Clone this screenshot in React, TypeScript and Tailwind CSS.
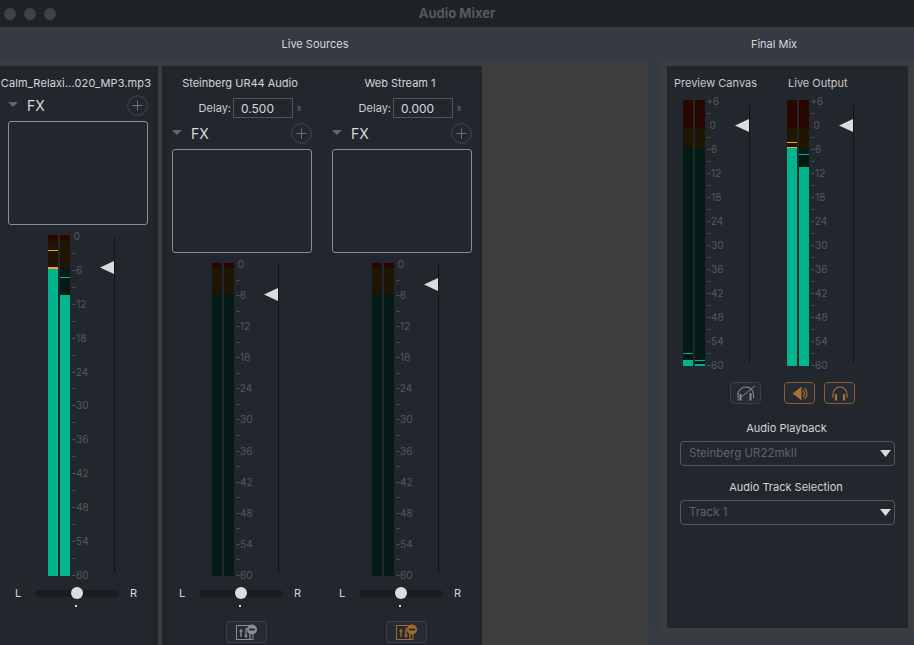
const FONT = "font-['Inter','Liberation_Sans',sans-serif]";

interface BarProps {
  h: number;
  red: number;
  amber: number;
  fill?: number;
  cap?: number;
  peak?: number;
  peakColor?: string;
}

function Bar({ h, red, amber, fill = 0, cap = 0, peak, peakColor = '#00b48d' }: BarProps) {
  return (
    <div className="relative flex w-[10px] flex-col" style={{ height: h }}>
      <div className="bg-[#2a0600]" style={{ height: red }} />
      <div className="bg-[#1f1503]" style={{ height: amber }} />
      <div className="flex-1 bg-[#031a15]" />
      {fill > 0 && (
        <div className="absolute bottom-0 left-0 w-full bg-[#00b48d]" style={{ height: fill }}>
          {cap > 0 && <div className="absolute left-0 w-full bg-[#f5a623]" style={{ height: cap, top: -cap }} />}
        </div>
      )}
      {peak !== undefined && <div className="absolute left-0 h-px w-full" style={{ top: peak, backgroundColor: peakColor }} />}
    </div>
  );
}

function Scale({ labels, zeroInset }: { labels: string[]; zeroInset: string }) {
  return (
    <div className="flex h-full w-[44px] flex-col justify-between pb-[1px] pt-[1px] pl-[1.5px]">
      {labels.map((label, i) => (
        <div
          key={i}
          className={`flex h-0 items-center text-[10px] leading-none text-[#56595e] ${label === '0' ? zeroInset : ''}`}
        >
          {label}
        </div>
      ))}
    </div>
  );
}

function Fader({ top }: { top: number }) {
  return (
    <div className="relative mb-[3px] mt-[2px] w-px bg-[#111417]">
      <svg className="absolute right-[1px]" style={{ top }} width="14" height="13" viewBox="0 0 14 13">
        <polygon points="0,6.5 14,0 14,13" fill="#dcdcdc" />
      </svg>
    </div>
  );
}

function MeterRow({ h, labels, left, right, top, zeroInset }: {
  h: number;
  labels: string[];
  left: BarProps;
  right: BarProps;
  top: number;
  zeroInset: string;
}) {
  return (
    <div className="flex" style={{ height: h }}>
      <div className="flex gap-[2px]">
        <Bar {...left} />
        <Bar {...right} />
      </div>
      <Scale labels={labels} zeroInset={zeroInset} />
      <Fader top={top} />
    </div>
  );
}

const sourceLabels = ['0', '-', '-6', '-', '-12', '-', '-18', '-', '-24', '-', '-30', '-', '-36', '-', '-42', '-', '-48', '-', '-54', '-', '-60'];
const outputLabels = ['+6', '-', ...sourceLabels];

function PlusCircle() {
  return (
    <svg width="21" height="21" viewBox="0 0 21 21" fill="none">
      <circle cx="10.5" cy="10.5" r="9.8" stroke="#44484f" />
      <path d="M10.5 5.5v10M5.5 10.5h10" stroke="#6f7378" />
    </svg>
  );
}

function FxSection() {
  return (
    <>
      <div className="flex h-[31px] items-center pl-[10px] pr-[10px]">
        <svg width="10" height="5" viewBox="0 0 10 5" className="-mt-[2px]">
          <polygon points="0,0 10,0 5,5" fill="#62656a" />
        </svg>
        <span className="ml-[9px] flex-1 text-[14px] text-[#d8d8d8]">FX</span>
        <PlusCircle />
      </div>
      <div className="mx-[10px] h-[104px] rounded-[3px] border border-[#8c8e90]" />
    </>
  );
}

function Pan() {
  return (
    <div className="mt-[10px] flex h-[14px] items-center text-[11px] text-[#d8d8d8]">
      <span className="w-[37px] pl-[17px]">L</span>
      <div className="relative h-[7px] w-[84px] rounded-[4px] bg-[#1a1d20]">
        <div className="absolute left-[36px] top-[-2.5px] h-[12px] w-[12px] rounded-full bg-[#dddddd]" />
        <div className="absolute left-[40px] top-[15px] h-[2px] w-[1.5px] bg-[#dddddd]" />
      </div>
      <span className="ml-[11px]">R</span>
    </div>
  );
}

function MixerIcon({ color }: { color: string }) {
  return (
    <svg width="41" height="22" viewBox="0 0 41 22" fill="none">
      <rect x="10.5" y="4.5" width="16.5" height="14" stroke={color} />
      <path d="M15 8v8M20 7v10M13.5 10h3M18.5 14.5h3M24 10v8" stroke={color} strokeWidth="1.4" />
      <circle cx="26" cy="8.5" r="5" fill={color} />
      <path d="M23 8.5h6" stroke="#22272e" strokeWidth="1.8" />
    </svg>
  );
}

function Channel({ name, delay, top, bar, left, right, mixColor, shift }: {
  name: string;
  delay?: string;
  top: number;
  bar: { h: number; red: number; amber: number };
  left?: Partial<BarProps>;
  right?: Partial<BarProps>;
  mixColor?: string;
  shift?: boolean;
}) {
  return (
    <div className={`flex w-[160px] shrink-0 flex-col ${shift ? '-ml-[2px]' : ''}`}>
      <div className={`mt-[10px] h-[14px] whitespace-nowrap pr-[4px] text-center text-[11px] leading-[14px] text-[#d6d6d6] ${shift ? 'tracking-[0.12px]' : ''}`}>
        {name}
      </div>
      {delay && (
        <div className="mt-[8px] flex h-[20px] items-center">
          <span className="w-[69px] text-right text-[11px] text-[#cfcfcf]">Delay:</span>
          <input
            readOnly
            value={delay}
            className="ml-[2px] h-[20px] w-[60px] border border-[#50545a] bg-transparent px-[7px] text-[12px] text-[#d8d8d8] outline-none"
          />
          <span className="ml-[4px] text-[8px] text-[#6d7075]">s</span>
        </div>
      )}
      <FxSection />
      <div className="ml-[50px] mt-[10px]">
        <MeterRow h={bar.h} labels={sourceLabels} left={{ ...bar, ...left }} right={{ ...bar, ...right }} top={top} zeroInset="pl-[2px]" />
      </div>
      <Pan />
      {mixColor && (
        <button type="button" className="ml-[64px] mt-[21px] h-[22px] w-[41px] rounded-[4px] border border-[#3b3f47] bg-[#262a32]">
          <span className="-m-px block">
            <MixerIcon color={mixColor} />
          </span>
        </button>
      )}
    </div>
  );
}

function OutputStrip({ left, right }: { left: BarProps; right: BarProps }) {
  return <MeterRow h={266} labels={outputLabels} left={left} right={right} top={17} zeroInset="pl-[3px]" />;
}

function SelectBox({ label, value, labelClass }: { label: string; value: string; labelClass: string }) {
  return (
    <>
      <div className={`${labelClass} h-[14px] text-center text-[11px] leading-[14px] text-[#d4d4d4]`}>{label}</div>
      <div className="mt-[6px] flex h-[25px] items-center justify-between rounded-[4px] border border-[#55585f] pl-[8px] pr-[3px] text-[11.5px] text-[#5f6368]">
        {value}
        <svg width="11" height="7" viewBox="0 0 11 7">
          <polygon points="0,0 11,0 5.5,7" fill="#dcdcdc" />
        </svg>
      </div>
    </>
  );
}

const srcBar = { h: 313, red: 5, amber: 26 };
const outBar = { h: 266, red: 28, amber: 20 };
const orange = '#f5a623';

export default function App() {
  return (
    <div className={`${FONT} flex h-[645px] w-[914px] flex-col overflow-hidden bg-[#3d3d3d]`}>
      <div className="relative flex h-[27px] shrink-0 items-center justify-center bg-[#1f2226]">
        <div className="absolute left-[4px] flex gap-[8px]">
          <span className="h-[12px] w-[12px] rounded-full bg-[#404347]" />
          <span className="h-[12px] w-[12px] rounded-full bg-[#404347]" />
          <span className="h-[12px] w-[12px] rounded-full bg-[#404347]" />
        </div>
        <span className="text-[13px] font-bold text-[#56595d]">Audio Mixer</span>
      </div>
      <div className="flex h-[34px] shrink-0 items-center bg-[#353a43] pt-[1px] text-[11px] text-[#d8d8d8]">
        <div className="w-[630px] shrink-0 text-center">Live Sources</div>
        <div className="w-[288px] shrink-0 text-center">Final Mix</div>
      </div>
      <div className="flex min-h-0 flex-1">
        <div className="mt-[5px] w-[158px] shrink-0 overflow-hidden bg-[#22272e]">
          <Channel
            shift
            name="Calm_Relaxi...020_MP3.mp3"
            top={24}
            bar={{ h: 341, red: 6, amber: 27 }}
            left={{ fill: 307, cap: 2, peak: 15, peakColor: orange }}
            right={{ fill: 281, peak: 42 }}
          />
        </div>
        <div className="ml-[4px] mt-[5px] flex w-[320px] shrink-0 bg-[#22272e]">
          <Channel name="Steinberg UR44 Audio" delay="0.500" top={23} bar={srcBar} mixColor="#8a8d92" />
          <Channel name="Web Stream 1" delay="0.000" top={13} bar={srcBar} mixColor="#a06a2c" />
        </div>
        <div className="ml-[165px] flex w-[267px] shrink-0 flex-col">
          <div className="flex min-h-0 flex-1">
            <div className="mb-[2px] w-[15px] shrink-0 bg-[#353a43]" />
            <div className="pb-[5px] pl-[5px] pr-[6px] pt-[5px]">
              <div className="h-full w-[241px] bg-[#22272e]">
                <div className="pt-[10px]">
                  <div className="flex h-[14px] text-[11px] leading-[14px] text-[#c8c8c8]">
                    <span className="ml-[7px] w-[114px]">Preview Canvas</span>
                    <span>Live Output</span>
                  </div>
                </div>
                <div className="ml-[16px] mt-[10px] flex gap-[37px]">
                  <OutputStrip
                    left={{ ...outBar, fill: 6, peak: 253 }}
                    right={{ ...outBar, fill: 2, peak: 260 }}
                  />
                  <OutputStrip
                    left={{ ...outBar, fill: 218, cap: 1, peak: 42, peakColor: orange }}
                    right={{ ...outBar, fill: 199, peak: 54 }}
                  />
                </div>
                <div className="ml-[63px] mt-[16px] flex">
                  <button type="button" className="flex h-[22px] w-[31px] items-center justify-center rounded-[4px] border border-[#3b3f47] bg-[#262a32]">
                    <svg width="20" height="16" viewBox="0 0 20 16" fill="none" stroke="#85888d">
                      <path d="M2 13V10C2 5 6 2 10 2c2.500 0 4.500 1 6 3 1 1.500 1.500 3 1.500 5v3" strokeWidth="1.1" />
                      <path d="M1 15.500 19 1" strokeWidth="1" />
                      <path d="M4.500 9v6.500M14.500 8v7.500" strokeWidth="2" />
                    </svg>
                  </button>
                  <button type="button" className="ml-[23px] flex h-[22px] w-[31px] items-center justify-center rounded-[4px] border border-[#8b5f2b] bg-[#262a32]">
                    <svg width="16" height="15" viewBox="0 0 16 15" fill="none">
                      <path d="M0.500 7.500 4 5 9.500 0.500v14L4 10z" fill="#a8722f" />
                      <path d="M11 4.500a4 4 0 0 1 0 6M12.500 2a7.500 7.500 0 0 1 0 11" stroke="#a8722f" strokeWidth="1.2" />
                    </svg>
                  </button>
                  <button type="button" className="ml-[9px] flex h-[22px] w-[31px] items-center justify-center rounded-[4px] border border-[#8b5f2b] bg-[#262a32]">
                    <svg width="16" height="15" viewBox="0 0 16 15" fill="none" stroke="#a8722f">
                      <path d="M1 12V8a7 7 0 0 1 14 0v4" strokeWidth="1.1" />
                      <path d="M4 8v6.500M12 8v6.500" strokeWidth="2.2" />
                    </svg>
                  </button>
                </div>
                <div className="mx-[13px]">
                  <SelectBox label="Audio Playback" value="Steinberg UR22mkII" labelClass="mt-[17px] pr-[2px]" />
                  <SelectBox label="Audio Track Selection" value="Track 1" labelClass="mt-[14px] pr-[3px]" />
                </div>
              </div>
            </div>
          </div>
          <div className="h-[12px] shrink-0 bg-[#353a43]" />
        </div>
      </div>
    </div>
  );
}
